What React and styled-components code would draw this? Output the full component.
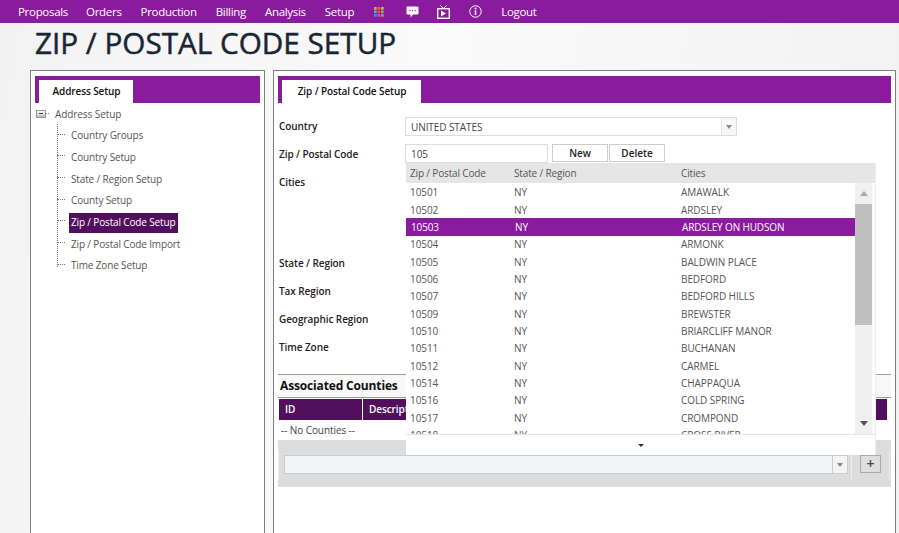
import React from "react";
import styled, { createGlobalStyle } from "styled-components";

const GlobalStyle = createGlobalStyle`
  html, body { margin: 0; padding: 0; height: 100%; overflow: hidden; }
  body {
    font-family: "Open Sans", "Noto Sans", sans-serif;
    font-size: 10px;
    letter-spacing: -0.08px;
    color: #333;
    background: #f5f5f5;
  }
`;

const PURPLE = "#8a1a9e";
const DARK = "#520f5e";

const Page = styled.div`
  width: 899px;
  height: 533px;
  overflow: hidden;
  display: flex;
  flex-direction: column;
  background: linear-gradient(100deg, #f2f2f2 0%, #fafafa 45%, #f1f1f1 100%);
`;

const Nav = styled.nav`
  height: 23px;
  flex: none;
  background: ${PURPLE};
  display: flex;
  align-items: center;
  padding-left: 18px;
`;

const NavLink = styled.span`
  color: #fff;
  font-size: 11.5px;
  letter-spacing: -0.3px;
  margin-right: ${(p) => p.$gap}px;
`;

const NavIcon = styled.svg`
  flex: none;
  margin-right: ${(p) => p.$gap}px;
`;

const Title = styled.h1`
  margin: 0;
  height: 47px;
  padding: 1px 0 0 35px;
  box-sizing: border-box;
  font-size: 29.7px;
  line-height: 37px;
  font-weight: 400;
  color: #1a2535;
  letter-spacing: 0;
  -webkit-text-stroke: 0.5px #1a2535;
`;

const Columns = styled.div`
  flex: 1;
  display: flex;
  gap: 8px;
  padding: 0 3px 0 30px;
  min-height: 0;
`;

const Panel = styled.section`
  position: relative;
  box-sizing: border-box;
  width: ${(p) => p.$width}px;
  height: 470px;
  border: 1px solid #7f7f7f;
  background: #fff;
  padding: 5px 4px;
`;

const TabBand = styled.div`
  height: 27px;
  background: ${PURPLE};
  padding: 4px 0 0 4px;
  box-sizing: border-box;
  display: flex;
`;

const Tab = styled.div`
  background: #fff;
  width: ${(p) => p.$width}px;
  box-sizing: border-box;
  padding: 0 0 1px 1px;
  font-weight: 600;
  font-size: 10px;
  color: #111;
  display: flex;
  align-items: center;
  justify-content: center;
  letter-spacing: -0.1px;
`;

const Tree = styled.div`
  padding: 0 0 0 1px;
`;

const TreeRoot = styled.div`
  box-sizing: border-box;
  height: 22.5px;
  padding-bottom: 1px;
  display: flex;
  align-items: center;
  gap: 5px;
  color: #555;
`;

const Expander = styled.span`
  width: 10px;
  height: 8px;
  border: 1px solid #999;
  background: linear-gradient(#fff, #bbb);
  position: relative;
  box-sizing: border-box;
  flex: none;
  &::after {
    content: "";
    position: absolute;
    left: 2px;
    right: 2px;
    top: 2px;
    height: 1px;
    background: #444;
  }
`;

const RootDash = styled.span`
  width: 3px;
  border-top: 1px dotted #888;
  margin-left: -5px;
  margin-right: 1px;
`;

const TreeList = styled.ul`
  position: relative;
  list-style: none;
  margin: 0;
  padding: 0 0 0 32px;
  &::before {
    content: "";
    position: absolute;
    left: 21px;
    top: -2px;
    bottom: 10px;
    border-left: 1px dotted #777;
  }
`;

const TreeItem = styled.li`
  position: relative;
  height: 21.7px;
  display: flex;
  align-items: center;
  &::before {
    content: "";
    position: absolute;
    left: -11px;
    top: 8px;
    width: 8px;
    border-top: 1px dotted #777;
  }
`;

const TreeLabel = styled.span`
  padding: 0 3px 0 2px;
  margin-left: 1px;
  height: 20px;
  line-height: 19px;
  white-space: nowrap;
  letter-spacing: -0.15px;
  color: ${(p) => (p.$active ? "#fff" : "#555")};
  background: ${(p) => (p.$active ? DARK : "transparent")};
`;

const Form = styled.div`
  padding: 14px 0 0 1px;
  height: 271px;
  box-sizing: border-box;
`;

const FormRow = styled.div`
  display: flex;
  height: ${(p) => p.$height}px;
`;

const Label = styled.label`
  width: 126px;
  flex: none;
  font-weight: 600;
  color: #222;
  padding-top: ${(p) => p.$top || 0}px;
  line-height: 14px;
`;

const SelectBox = styled.div`
  box-sizing: border-box;
  width: ${(p) => p.$width}px;
  height: 19px;
  border: 1px solid ${(p) => (p.$muted ? "#ccc" : "#ddd")};
  background: ${(p) => (p.$muted ? "#f3f4f6" : "#fff")};
  display: flex;
  align-items: center;
  justify-content: space-between;
  padding-left: 5px;
  color: #444;
`;

const SelectArrow = styled.span`
  width: 14px;
  align-self: stretch;
  border-left: 1px solid ${(p) => (p.$muted ? "#ccc" : "#e3e3e3")};
  background: ${(p) => (p.$muted ? "#f3f4f6" : "#f7f7f7")};
  display: flex;
  align-items: center;
  justify-content: center;
  &::after {
    content: "";
    border-left: 3.5px solid transparent;
    border-right: 3.5px solid transparent;
    border-top: 4px solid #888;
  }
`;

const TextInput = styled.div`
  box-sizing: border-box;
  width: 143px;
  height: 19px;
  border: 1px solid #ddd;
  padding-left: 5px;
  line-height: 19px;
  color: #444;
  background: #fff;
`;

const Button = styled.button`
  box-sizing: border-box;
  font: 600 10px "Open Sans", sans-serif;
  color: #222;
  background: #fff;
  border: 1px solid #ccc;
  width: ${(p) => p.$width}px;
  height: 18px;
  margin-left: ${(p) => p.$left}px;
  padding: 0 0 1px;
`;

const SectionHead = styled.h2`
  margin: 0;
  box-sizing: border-box;
  height: 24px;
  padding-left: 2px;
  border-top: 1px solid #999;
  border-bottom: 1px solid #999;
  background: #f8f8f8;
  font-size: 12px;
  line-height: 22px;
  font-weight: 700;
  letter-spacing: -0.15px;
  color: #111;
`;

const Counties = styled.div`
  padding: 1px 4px 0 1px;
`;

const HeadRow = styled.div`
  display: flex;
  height: 21px;
  gap: 1px;
`;

const HeadCell = styled.div`
  background: ${DARK};
  color: #fff;
  font-weight: 600;
  line-height: 20px;
  padding-left: 6px;
  box-sizing: border-box;
  width: ${(p) => (p.$width ? `${p.$width}px` : "auto")};
  flex: ${(p) => (p.$width ? "none" : 1)};
`;

const EmptyRow = styled.div`
  height: 20px;
  line-height: 20px;
  padding-left: 2px;
  color: #444;
`;

const Footer = styled.div`
  height: 47px;
  background: #dcdcdc;
  display: flex;
  align-items: flex-start;
  padding: 10px 1px 0 0;
  box-sizing: border-box;
`;

const FooterCell = styled.div`
  box-sizing: border-box;
  height: 29px;
  flex: ${(p) => (p.$grow ? 1 : "none")};
  width: ${(p) => (p.$grow ? "auto" : "38px")};
  display: flex;
  justify-content: ${(p) => (p.$grow ? "flex-start" : "center")};
  padding: 5px 0 0 ${(p) => (p.$grow ? 5 : 0)}px;
  border-left: ${(p) => (p.$grow ? "1px solid #eee" : "none")};
  border-right: 1px solid #eee;
`;

const AddButton = styled.div`
  box-sizing: border-box;
  width: 21px;
  height: 18px;
  border: 1px solid #aaa;
  background: #dedede;
  color: #444;
  font-size: 14px;
  font-weight: 600;
  line-height: 15px;
  text-align: center;
`;

// lista desplegable abierta, va por encima del formulario
const Dropdown = styled.div`
  position: absolute;
  left: 132px;
  top: 92px;
  width: 469px;
  height: 292px;
  background: #fff;
  display: flex;
  flex-direction: column;
  box-shadow: 1px 0 0 #eee;
`;

const DropHead = styled.div`
  height: 20px;
  flex: none;
  background: #e5e5e5;
  display: grid;
  grid-template-columns: 104px 167px 1fr;
  align-items: center;
  padding-left: 4px;
  color: #555;
  letter-spacing: -0.15px;
`;

const DropBody = styled.div`
  flex: 1;
  min-height: 0;
  display: flex;
  padding-right: 3px;
  overflow: hidden;
`;

const Rows = styled.div`
  flex: 1;
  overflow: hidden;
  margin-top: 0.6px;
`;

const Row = styled.div`
  height: 17.33px;
  display: grid;
  grid-template-columns: 104px 167px 1fr;
  align-items: center;
  padding-left: ${(p) => (p.$active ? 5 : 4)}px;
  font-weight: ${(p) => (p.$active ? 500 : 400)};
  letter-spacing: ${(p) => (p.$active ? "-0.15px" : "-0.08px")};
  color: ${(p) => (p.$active ? "#fff" : "#555")};
  background: ${(p) => (p.$active ? PURPLE : "transparent")};
`;

const Scrollbar = styled.div`
  width: 17px;
  flex: none;
  background: #f0f0f0;
  display: flex;
  flex-direction: column;
`;

const ScrollArrow = styled.div`
  height: 21px;
  flex: none;
  display: flex;
  align-items: center;
  justify-content: center;
  &::after {
    content: "";
    border-left: 4.5px solid transparent;
    border-right: 4.5px solid transparent;
    ${(p) => (p.$up ? "border-bottom: 5px solid #aaa;" : "border-top: 5px solid #555;")}
  }
`;

const ScrollThumb = styled.div`
  height: 121px;
  background: #bfbfbf;
  flex: none;
`;

const ScrollSpace = styled.div`
  flex: 1;
`;

const DropFoot = styled.div`
  height: 20px;
  flex: none;
  border-top: 1px solid #e4e4e4;
  display: flex;
  align-items: center;
  justify-content: center;
  &::after {
    content: "";
    border-left: 3px solid transparent;
    border-right: 3px solid transparent;
    border-top: 3px solid #333;
  }
`;

const zips = [
  ["10501", "AMAWALK"],
  ["10502", "ARDSLEY"],
  ["10503", "ARDSLEY ON HUDSON"],
  ["10504", "ARMONK"],
  ["10505", "BALDWIN PLACE"],
  ["10506", "BEDFORD"],
  ["10507", "BEDFORD HILLS"],
  ["10509", "BREWSTER"],
  ["10510", "BRIARCLIFF MANOR"],
  ["10511", "BUCHANAN"],
  ["10512", "CARMEL"],
  ["10514", "CHAPPAQUA"],
  ["10516", "COLD SPRING"],
  ["10517", "CROMPOND"],
  ["10518", "CROSS RIVER"],
];

const treeItems = [
  "Country Groups",
  "Country Setup",
  "State / Region Setup",
  "County Setup",
  "Zip / Postal Code Setup",
  "Zip / Postal Code Import",
  "Time Zone Setup",
];

const gridColors = ["#e8a33d", "#e85d8a", "#c9c23c", "#4bb8c9", "#e04f4f", "#6fbf5a", "#5a7fd6", "#b05ad6", "#e8803d"];

const App = () => {
  return (
    <Page>
      <GlobalStyle />
      <Nav>
        <NavLink $gap={18}>Proposals</NavLink>
        <NavLink $gap={19}>Orders</NavLink>
        <NavLink $gap={19}>Production</NavLink>
        <NavLink $gap={19}>Billing</NavLink>
        <NavLink $gap={19}>Analysis</NavLink>
        <NavLink $gap={20}>Setup</NavLink>
        <NavIcon $gap={22} width="10" height="10" viewBox="0 0 10 10">
          {gridColors.map((c, i) => (
            <rect key={i} x={(i % 3) * 3.5} y={Math.floor(i / 3) * 3.5} width="2.7" height="2.7" fill={c} />
          ))}
        </NavIcon>
        <NavIcon $gap={18} width="13" height="12" viewBox="0 0 13 12">
          <path d="M1.5 0.5h10a1 1 0 0 1 1 1v6a1 1 0 0 1-1 1H7l-2.5 3V8.500H1.500a1 1 0 0 1-1-1v-6a1 1 0 0 1 1-1z" fill="#fff" />
          <circle cx="4" cy="4.500" r="0.7" fill={PURPLE} />
          <circle cx="6.500" cy="4.500" r="0.7" fill={PURPLE} />
          <circle cx="9" cy="4.500" r="0.7" fill={PURPLE} />
        </NavIcon>
        <NavIcon $gap={19} width="13" height="14" viewBox="0 0 13 14">
          <path d="M3.500 0.500l3 3 3-3" fill="none" stroke="#fff" strokeWidth="1" />
          <rect x="0.700" y="3.700" width="11.600" height="9.600" fill="none" stroke="#fff" strokeWidth="1.400" />
          <path d="M4 5.500v6l5-3z" fill="#fff" />
        </NavIcon>
        <NavIcon $gap={19} width="13" height="13" viewBox="0 0 13 13">
          <circle cx="6.500" cy="6.500" r="5.700" fill="none" stroke="#fff" strokeWidth="1" />
          <rect x="5.700" y="5.300" width="1.600" height="4.700" fill="#fff" />
          <circle cx="6.500" cy="3.600" r="1" fill="#fff" />
        </NavIcon>
        <NavLink $gap={0}>Logout</NavLink>
      </Nav>
      <Title>ZIP / POSTAL CODE SETUP</Title>
      <Columns>
        <Panel $width={235}>
          <TabBand>
            <Tab $width={94}>Address Setup</Tab>
          </TabBand>
          <Tree>
            <TreeRoot>
              <Expander />
              <RootDash />
              Address Setup
            </TreeRoot>
            <TreeList>
              {treeItems.map((t) => (
                <TreeItem key={t}>
                  <TreeLabel $active={t === "Zip / Postal Code Setup"}>{t}</TreeLabel>
                </TreeItem>
              ))}
            </TreeList>
          </Tree>
        </Panel>
        <Panel $width={623}>
          <TabBand>
            <Tab $width={139}>Zip / Postal Code Setup</Tab>
          </TabBand>
          <Form>
            <FormRow $height={27}>
              <Label $top={2}>Country</Label>
              <SelectBox $width={332}>
                UNITED STATES
                <SelectArrow />
              </SelectBox>
            </FormRow>
            <FormRow $height={28}>
              <Label $top={3}>Zip / Postal Code</Label>
              <TextInput>105</TextInput>
              <Button $width={56} $left={4}>New</Button>
              <Button $width={56} $left={1}>Delete</Button>
            </FormRow>
            <FormRow $height={84}>
              <Label $top={3}>Cities</Label>
            </FormRow>
            <FormRow $height={28}>
              <Label>State / Region</Label>
            </FormRow>
            <FormRow $height={28}>
              <Label>Tax Region</Label>
            </FormRow>
            <FormRow $height={28}>
              <Label>Geographic Region</Label>
            </FormRow>
            <FormRow $height={28}>
              <Label>Time Zone</Label>
            </FormRow>
          </Form>
          <SectionHead>Associated Counties</SectionHead>
          <Counties>
            <HeadRow>
              <HeadCell $width={83}>ID</HeadCell>
              <HeadCell>Description</HeadCell>
            </HeadRow>
            <EmptyRow>-- No Counties --</EmptyRow>
          </Counties>
          <Footer>
            <FooterCell $grow>
              <SelectBox $width={564} $muted>
                <span />
                <SelectArrow $muted />
              </SelectBox>
            </FooterCell>
            <FooterCell>
              <AddButton>+</AddButton>
            </FooterCell>
          </Footer>
          <Dropdown>
            <DropHead>
              <span>Zip / Postal Code</span>
              <span>State / Region</span>
              <span>Cities</span>
            </DropHead>
            <DropBody>
              <Rows>
                {zips.map(([zip, city]) => (
                  <Row key={zip} $active={zip === "10503"}>
                    <span>{zip}</span>
                    <span>NY</span>
                    <span>{city}</span>
                  </Row>
                ))}
              </Rows>
              <Scrollbar>
                <ScrollArrow $up />
                <ScrollThumb />
                <ScrollSpace />
                <ScrollArrow />
              </Scrollbar>
            </DropBody>
            <DropFoot />
          </Dropdown>
        </Panel>
      </Columns>
    </Page>
  );
};

export default App;
